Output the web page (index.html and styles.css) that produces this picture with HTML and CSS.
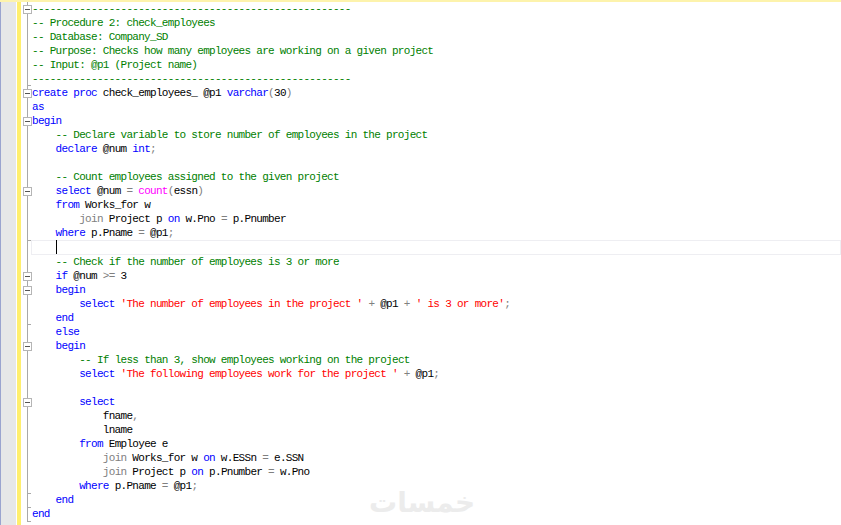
FILE: index.html
```html
<!DOCTYPE html>
<html lang="en">
<head>
<meta charset="utf-8">
<title>check_employees</title>
<link rel="stylesheet" href="styles.css">
</head>
<body>
<div class="topbar"></div>
<div class="editor">
  <div class="margin-blue"></div>
  <div class="margin-gray"></div>
  <div class="margin-white"></div>
  <div class="margin-yellow"></div>
  <div class="code">
    <div class="line"><span class="box"></span><span class="cm">------------------------------------------------------</span></div>
    <div class="line"><span class="cm">-- Procedure 2: check_employees</span></div>
    <div class="line"><span class="cm">-- Database: Company_SD</span></div>
    <div class="line"><span class="cm">-- Purpose: Checks how many employees are working on a given project</span></div>
    <div class="line"><span class="cm">-- Input: @p1 (Project name)</span></div>
    <div class="line fold-end"><span class="cm">------------------------------------------------------</span></div>
    <div class="line"><span class="box"></span><span class="kw">create</span> <span class="kw">proc</span> check_employees_ @p1 <span class="kw">varchar</span><span class="op">(</span>30<span class="op">)</span></div>
    <div class="line"><span class="kw">as</span></div>
    <div class="line"><span class="box"></span><span class="kw">begin</span></div>
    <div class="line">    <span class="cm">-- Declare variable to store number of employees in the project</span></div>
    <div class="line">    <span class="kw">declare</span> @num <span class="kw">int</span><span class="op">;</span></div>
    <div class="line"></div>
    <div class="line">    <span class="cm">-- Count employees assigned to the given project</span></div>
    <div class="line"><span class="box"></span>    <span class="kw">select</span> @num <span class="op">=</span> <span class="fn">count</span><span class="op">(</span>essn<span class="op">)</span></div>
    <div class="line">    <span class="kw">from</span> Works_for w</div>
    <div class="line">        <span class="op">join</span> Project p <span class="kw">on</span> w.Pno <span class="op">=</span> p.Pnumber</div>
    <div class="line fold-end tick-low">    <span class="kw">where</span> p.Pname <span class="op">=</span> @p1<span class="op">;</span></div>
    <div class="line current"><span class="caret-cell">    <span class="caret"></span></span></div>
    <div class="line">    <span class="cm">-- Check if the number of employees is 3 or more</span></div>
    <div class="line"><span class="box"></span>    <span class="kw">if</span> @num <span class="op">&gt;=</span> 3</div>
    <div class="line"><span class="box"></span>    <span class="kw">begin</span></div>
    <div class="line">        <span class="kw">select</span> <span class="str">'The number of employees in the project '</span> <span class="op">+</span> @p1 <span class="op">+</span> <span class="str">' is 3 or more'</span><span class="op">;</span></div>
    <div class="line fold-end">    <span class="kw">end</span></div>
    <div class="line">    <span class="kw">else</span></div>
    <div class="line"><span class="box"></span>    <span class="kw">begin</span></div>
    <div class="line">        <span class="cm">-- If less than 3, show employees working on the project</span></div>
    <div class="line">        <span class="kw">select</span> <span class="str">'The following employees work for the project '</span> <span class="op">+</span> @p1<span class="op">;</span></div>
    <div class="line"></div>
    <div class="line"><span class="box"></span>        <span class="kw">select</span></div>
    <div class="line">            fname<span class="op">,</span></div>
    <div class="line">            lname</div>
    <div class="line">        <span class="kw">from</span> Employee e</div>
    <div class="line">            <span class="op">join</span> Works_for w <span class="kw">on</span> w.ESSn <span class="op">=</span> e.SSN</div>
    <div class="line">            <span class="op">join</span> Project p <span class="kw">on</span> p.Pnumber <span class="op">=</span> w.Pno</div>
    <div class="line fold-end tick-low">        <span class="kw">where</span> p.Pname <span class="op">=</span> @p1<span class="op">;</span></div>
    <div class="line fold-end tick-low">    <span class="kw">end</span></div>
    <div class="line fold-end tick-low"><span class="kw">end</span></div>
  </div>
  <div class="watermark" lang="ar" dir="rtl">خمسات</div>
</div>
</body>
</html>
```
FILE: styles.css
```css
html, body {
  margin: 0;
  padding: 0;
  width: 841px;
  height: 525px;
  overflow: hidden;
  background: #fff;
}
.topbar {
  height: 2px;
  background: #fdf3ac;
}
.editor {
  position: relative;
  display: flex;
  height: 523px;
}
.margin-blue { width: 1px; background: #9aa4cf; }
.margin-gray { width: 15px; background: #e6e7e8; }
.margin-white { width: 1px; background: #fff; }
.margin-yellow { width: 4px; background: #ffef6e; }
.code {
  flex: 1;
  padding-left: 11px;
  background: linear-gradient(#a9a9a9, #a9a9a9) 6px 0 / 1px 520px no-repeat #fff;
  font-family: "Liberation Mono", monospace;
  font-size: 11px;
  letter-spacing: -0.7px;
  color: #000;
}
.line {
  position: relative;
  height: 14px;
  line-height: 14px;
  white-space: pre;
}
.fold-end::before {
  content: "";
  position: absolute;
  left: -5px;
  bottom: 0;
  width: 4px;
  height: 1px;
  background: #a9a9a9;
}
.tick-low::before { bottom: -1px; }
.box {
  position: absolute;
  left: -9px;
  top: 3px;
  width: 7px;
  height: 7px;
  border: 1px solid #b5b5b5;
  background: linear-gradient(#555, #555) center / 5px 1px no-repeat #fff;
}
.current {
  height: 15px;
  line-height: 15px;
  margin-left: -1px;
  padding-left: 1px;
  box-shadow: inset 0 0 0 1px #eeeef2;
}
.caret-cell { display: inline-block; height: 15px; }
.caret {
  display: inline-block;
  width: 1px;
  height: 14px;
  background: #000;
  vertical-align: top;
}
.cm { color: #008000; }
.kw { color: #0000ff; }
.str { color: #ff0000; }
.fn { color: #ff00ff; }
.op { color: #808080; }
.watermark {
  position: absolute;
  left: 369px;
  top: 483px;
  font-family: "DejaVu Sans", sans-serif;
  font-weight: 700;
  font-size: 28px;
  line-height: 36px;
  color: #ececec;
}
```
